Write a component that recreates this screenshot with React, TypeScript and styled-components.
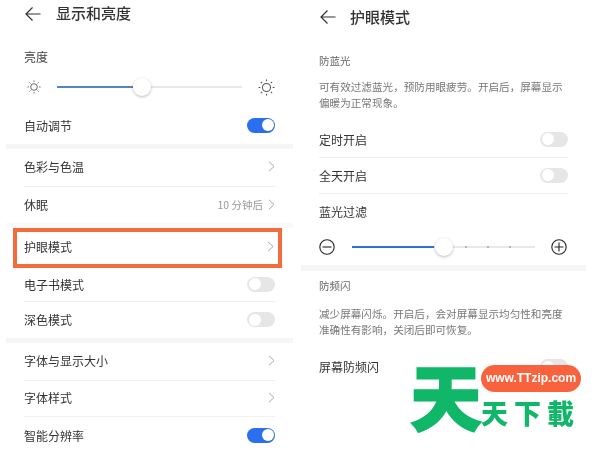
import styled, { createGlobalStyle } from 'styled-components';

const GlobalStyle = createGlobalStyle`
  html, body {
    margin: 0;
    width: 600px;
    height: 450px;
    overflow: hidden;
    background: #fff;
  }
  body {
    font-family: "Noto Sans CJK SC", "Noto Sans", sans-serif;
    color: #262626;
  }
`;

const Page = styled.div`
  position: relative;
  display: flex;
  width: 600px;
  height: 450px;
  overflow: hidden;
  filter: blur(0.3px);
`;

const Phone = styled.section<{ $left: number; $width: number }>`
  flex: none;
  width: ${({ $width }) => $width}px;
  margin-left: ${({ $left }) => $left}px;
`;

const Header = styled.header<{ $height: number; $inset: number; $gap: number }>`
  display: flex;
  align-items: center;
  gap: ${({ $gap }) => $gap}px;
  height: ${({ $height }) => $height}px;
  padding-left: ${({ $inset }) => $inset}px;
  font-size: 15px;
  font-weight: 500;
  color: #333;
`;

const Title = styled.span<{ $lift: number }>`
  padding-bottom: ${({ $lift }) => $lift}px;
`;

const SmallLabel = styled.div`
  margin: 19px 18px 0;
  height: 20px;
  line-height: 20px;
  font-size: 12px;
  color: #444;
`;

const SectionLabel = styled.div<{ $top: number }>`
  margin: ${({ $top }) => $top}px 18px 0;
  height: 20px;
  line-height: 20px;
  font-size: 10.5px;
  color: #666;
`;

const Description = styled.p<{ $top: number }>`
  margin: ${({ $top }) => $top}px 18px 11px;
  font-size: 10.6px;
  line-height: 16px;
  color: #777;
  white-space: nowrap;
`;

const SliderRow = styled.div<{ $height: number; $inset?: number }>`
  display: flex;
  align-items: center;
  height: ${({ $height }) => $height}px;
  margin: 0 18px;
  padding-left: ${({ $inset }) => $inset ?? 0}px;
`;

const Row = styled.div<{ $height: number; $line?: boolean }>`
  box-sizing: border-box;
  display: flex;
  align-items: center;
  justify-content: space-between;
  height: ${({ $height }) => $height}px;
  margin: 0 18px;
  padding-bottom: 1px;
  font-size: 12px;
  color: #333;
  border-bottom: ${({ $line }) => ($line ? '1px solid #efefef' : '0')};
`;

const Band = styled.div<{ $height: number; $tone?: string }>`
  height: ${({ $height }) => $height}px;
  background: ${({ $tone }) => $tone ?? '#f5f5f5'};
`;

const Highlight = styled.div`
  box-sizing: border-box;
  display: flex;
  align-items: center;
  justify-content: space-between;
  width: 269px;
  height: 40px;
  margin-left: 7px;
  padding: 0 4px 3px 7px;
  border: 4px solid #f26c3d;
  font-size: 12px;
  color: #333;
`;

const Trailing = styled.span`
  display: flex;
  align-items: center;
  gap: 5px;
  font-size: 10.5px;
  color: #999;
`;

const Toggle = styled.span<{ $on?: boolean }>`
  flex: none;
  display: flex;
  justify-content: ${({ $on }) => ($on ? 'flex-end' : 'flex-start')};
  align-items: center;
  box-sizing: border-box;
  width: 28px;
  height: 15px;
  padding: 1.5px;
  border-radius: 8px;
  background: ${({ $on }) => ($on ? '#2a6ff0' : '#e6e6e6')};

  &::after {
    content: '';
    width: 12px;
    height: 12px;
    border-radius: 50%;
    background: #fff;
  }
`;

const Track = styled.div<{ $left: number; $right: number; $width: number }>`
  position: relative;
  flex: none;
  width: ${({ $width }) => $width}px;
  height: 2px;
  margin: 0 ${({ $right }) => $right}px 0 ${({ $left }) => $left}px;
  background: #e8e8e8;
`;

const Fill = styled.div<{ $color: string }>`
  height: 100%;
  background: ${({ $color }) => $color};
`;

const Thumb = styled.span`
  position: absolute;
  top: 50%;
  width: 18px;
  height: 18px;
  border-radius: 50%;
  background: #fff;
  box-shadow: 0 1px 3px rgba(0, 0, 0, 0.28);
  transform: translate(-50%, -50%);
`;

const Tick = styled.i`
  position: absolute;
  top: 0;
  width: 2px;
  height: 2px;
  background: #b5b5b5;
`;

const Watermark = styled.div`
  position: absolute;
  left: 410px;
  top: 358px;
  display: flex;
  color: #10b768;
`;

const BigMark = styled.span`
  width: 71px;
  font-size: 72px;
  line-height: 72px;
  font-weight: 900;
  -webkit-text-stroke: 1.5px #10b768;
`;

const MarkSide = styled.div`
  display: flex;
  flex-direction: column;
  padding-top: 7px;
`;

const Pill = styled.span`
  width: 100px;
  height: 27px;
  line-height: 27px;
  border-radius: 14px;
  text-align: center;
  font-family: "Liberation Sans", sans-serif;
  font-size: 12px;
  font-weight: 700;
  color: #fff;
  background: #f8623c;
`;

const MarkName = styled.span`
  margin-top: 6px;
  width: 100px;
  font-size: 27px;
  line-height: 30px;
  letter-spacing: 6px;
  font-weight: 900;
  white-space: nowrap;
`;

const Arrow = ({ size = 16 }: { size?: number }) => (
  <svg width={size} height={size} viewBox="0 0 16 16" fill="none" stroke="#333" strokeWidth="1.2">
    <path d="M15.5 8H1M7.5 1.5 1 8l6.5 6.5" />
  </svg>
);

const Chevron = () => (
  <svg width="7" height="11" viewBox="0 0 7 11" fill="none" stroke="#a8a8a8" strokeWidth="1">
    <path d="M1 .8 6 5.5 1 10.2" />
  </svg>
);

const Sun = ({ size }: { size: number }) => (
  <svg width={size} height={size} viewBox="0 0 16 16" fill="none" stroke="#555" strokeWidth="1">
    <circle cx="8" cy="8" r="3.8" />
    <path d="M8 .5v1.7M8 13.8v1.7M.5 8h1.7M13.8 8h1.7M2.7 2.7 3.9 3.9M12.1 12.1l1.2 1.2M2.7 13.3l1.2-1.2M12.1 3.9l1.2-1.2" />
  </svg>
);

const RoundSign = ({ plus }: { plus?: boolean }) => (
  <svg width="16" height="16" viewBox="0 0 16 16" fill="none" stroke="#222" strokeWidth="1.1">
    <circle cx="8" cy="8" r="7.2" />
    <path d={plus ? 'M3.5 8h9M8 3.5v9' : 'M3.5 8h9'} />
  </svg>
);

const tickSpots = [62, 74, 86];

export default function App() {
  return (
    <Page>
      <GlobalStyle />
      <Phone $left={6} $width={287}>
        <Header $height={28} $inset={19} $gap={15}>
          <Arrow />
          <Title $lift={3}>显示和亮度</Title>
        </Header>
        <SmallLabel>亮度</SmallLabel>
        <SliderRow $height={40} $inset={3}>
          <Sun size={14} />
          <Track $left={16} $right={16} $width={185}>
            <Fill $color="#4f86c6" style={{ width: '41%' }} />
            <Thumb style={{ left: '46%' }} />
          </Track>
          <Sun size={17} />
        </SliderRow>
        <Row $height={37}>
          自动调节
          <Toggle $on />
        </Row>
        <Band $height={5} />
        <Row $height={37.5} $line>
          色彩与色温
          <Chevron />
        </Row>
        <Row $height={36.5}>
          休眠
          <Trailing>
            10 分钟后
            <Chevron />
          </Trailing>
        </Row>
        <Band $height={5} $tone="#f9f9f9" />
        <Highlight>
          护眼模式
          <Chevron />
        </Highlight>
        <Row $height={34} $line>
          电子书模式
          <Toggle />
        </Row>
        <Row $height={36}>
          深色模式
          <Toggle />
        </Row>
        <Band $height={5} />
        <Row $height={37.5} $line>
          字体与显示大小
          <Chevron />
        </Row>
        <Row $height={36.5} $line>
          字体样式
          <Chevron />
        </Row>
        <Row $height={37}>
          智能分辨率
          <Toggle $on />
        </Row>
      </Phone>
      <Phone $left={8} $width={285}>
        <Header $height={34} $inset={19} $gap={14}>
          <Arrow />
          <Title $lift={2}>护眼模式</Title>
        </Header>
        <SectionLabel $top={17}>防蓝光</SectionLabel>
        <Description $top={8}>
          可有效过滤蓝光，预防用眼疲劳。开启后，屏幕显示
          <br />
          偏暖为正常现象。
        </Description>
        <Row $height={36} $line>
          定时开启
          <Toggle />
        </Row>
        <Row $height={36} $line>
          全天开启
          <Toggle />
        </Row>
        <Row $height={35}>蓝光过滤</Row>
        <SliderRow $height={36}>
          <RoundSign />
          <Track $left={17} $right={16} $width={183}>
            <Fill $color="#2f6fd8" style={{ width: '45%' }} />
            {tickSpots.map((spot) => (
              <Tick key={spot} style={{ left: `${spot}%` }} />
            ))}
            <Thumb style={{ left: '50%' }} />
          </Track>
          <RoundSign plus />
        </SliderRow>
        <Band $height={6} />
        <SectionLabel $top={5}>防频闪</SectionLabel>
        <Description $top={10}>
          减少屏幕闪烁。开启后，会对屏幕显示均匀性和亮度
          <br />
          准确性有影响，关闭后即可恢复。
        </Description>
        <Row $height={36}>
          屏幕防频闪
          <Toggle />
        </Row>
      </Phone>
      <Watermark>
        <BigMark>天</BigMark>
        <MarkSide>
          <Pill>www.TTzip.com</Pill>
          <MarkName>天下載</MarkName>
        </MarkSide>
      </Watermark>
    </Page>
  );
}
